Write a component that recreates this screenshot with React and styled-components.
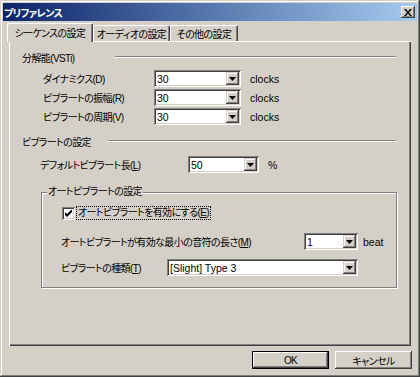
import React from 'react'
import styled, { createGlobalStyle } from 'styled-components'

const GlobalStyle = createGlobalStyle`
  html, body { margin: 0; padding: 0; background: #D4D0C8; }
  body {
    font-family: "Liberation Sans", "Noto Sans CJK JP", sans-serif;
    font-size: 10px;
    letter-spacing: -0.6px;
    font-feature-settings: "palt";
    color: #000;
  }
`

export default function App() {
    return (
        <Window>
            <GlobalStyle />
            <TitleBar>
                <Title>プリファレンス</Title>
                <CloseButton>
                    <svg width="8" height="7" viewBox="0 0 8 7">
                        <path d="M0 0h2l2 2.5L6 0h2L5 3.5 8 7H6L4 4.5 2 7H0l3-3.5z" fill="#000" />
                    </svg>
                </CloseButton>
            </TitleBar>
            <Body>
                <TabStrip>
                    <Tab active w={86}>シーケンスの設定</Tab>
                    <Tab w={77}>オーディオの設定</Tab>
                    <Tab w={68}>その他の設定</Tab>
                </TabStrip>
                <Panel>
                    <Header>
                        <HeaderText w={93}>分解能(VSTi)</HeaderText>
                        <Etched />
                    </Header>
                    <Rows indent={21} top={6}>
                        <Row>
                            <Label w={111}>ダイナミクス(D)</Label>
                            <Combo w={87} value="30" />
                            <Unit>clocks</Unit>
                        </Row>
                        <Row>
                            <Label w={111}>ビブラートの振幅(R)</Label>
                            <Combo w={87} value="30" />
                            <Unit>clocks</Unit>
                        </Row>
                        <Row>
                            <Label w={111}>ビブラートの周期(V)</Label>
                            <Combo w={87} value="30" />
                            <Unit>clocks</Unit>
                        </Row>
                    </Rows>
                    <Header top={9}>
                        <HeaderText w={86}>ビブラートの設定</HeaderText>
                        <Etched />
                    </Header>
                    <Rows indent={18} top={8}>
                        <Row>
                            <Label w={148}>デフォルトビブラート長(<u>L</u>)</Label>
                            <Combo w={71} value="50" />
                            <Unit>%</Unit>
                        </Row>
                    </Rows>
                    <GroupBox>
                        <Legend>オートビブラートの設定</Legend>
                        <CheckRow>
                            <CheckBox>
                                <svg width="7" height="7" viewBox="0 0 7 7">
                                    <path d="M0 2v3l2 2 5-5V-1L2 4z" fill="#000" />
                                </svg>
                            </CheckBox>
                            <FocusLabel>オートビブラートを有効にする(<u>E</u>)</FocusLabel>
                        </CheckRow>
                        <Rows indent={19} top={13} gap={9}>
                            <Row>
                                <Label w={243}>オートビブラートが有効な最小の音符の長さ(<u>M</u>)</Label>
                                <Combo w={54} value="1" />
                                <Unit gap={5}>beat</Unit>
                            </Row>
                            <Row>
                                <Label w={106}>ビブラートの種類(<u>T</u>)</Label>
                                <Combo w={191} value="[Slight] Type 3" />
                            </Row>
                        </Rows>
                    </GroupBox>
                </Panel>
                <ButtonRow>
                    <Button primary>OK</Button>
                    <Button>キャンセル</Button>
                </ButtonRow>
            </Body>
        </Window>
    )
}

function Combo({ w, value }) {
    return (
        <ComboBox w={w}>
            <ComboText>{value}</ComboText>
            <DropButton>
                <svg width="7" height="4" viewBox="0 0 7 4">
                    <path d="M0 0h7L3.5 4z" fill="#000" />
                </svg>
            </DropButton>
        </ComboBox>
    )
}

const Window = styled.div`
    width: 420px;
    height: 377px;
    box-sizing: border-box;
    padding: 3px;
    background: #D4D0C8;
    box-shadow: inset -1px -1px #404040, inset 1px 1px #D4D0C8, inset -2px -2px #808080, inset 2px 2px #fff;
    display: flex;
    flex-direction: column;
`
const TitleBar = styled.div`
    height: 18px;
    background: linear-gradient(to right, #0A246A, #A6CAF0);
    display: flex;
    align-items: center;
    justify-content: space-between;
    padding: 0 2px 0 1px;
`
const Title = styled.div`
    color: #fff;
    font-weight: bold;
`
const CloseButton = styled.div`
    width: 14px;
    height: 12px;
    box-sizing: border-box;
    background: #D4D0C8;
    box-shadow: inset -1px -1px #404040, inset 1px 1px #fff, inset -2px -2px #808080;
    display: flex;
    align-items: center;
    justify-content: center;
`
const Body = styled.div`
    display: flex;
    flex-direction: column;
    padding: 2px 5px 0 6px;
`
const TabStrip = styled.div`
    height: 18px;
    display: flex;
    align-items: flex-end;
    margin-left: -2px;
    position: relative;
    z-index: 1;
`
const Tab = styled.div`
    width: ${p => p.w}px;
    height: ${p => (p.active ? 19 : 16)}px;
    margin-bottom: ${p => (p.active ? -1 : 0)}px;
    box-sizing: border-box;
    background: #D4D0C8;
    border-top-left-radius: 2px;
    border-top-right-radius: 2px;
    border-left: 1px solid #fff;
    border-top: 1px solid #fff;
    border-right: 1px solid #404040;
    box-shadow: inset -1px 0 #808080;
    display: flex;
    align-items: center;
    justify-content: center;
    padding-bottom: ${p => (p.active ? 2 : 0)}px;
    white-space: nowrap;
`
const Panel = styled.div`
    width: 402px;
    height: 305px;
    box-sizing: border-box;
    padding: 9px 15px 0 13px;
    box-shadow: inset 1px 1px #fff, inset -1px -1px #404040, inset -2px -2px #808080;
    display: flex;
    flex-direction: column;
`
const Header = styled.div`
    display: flex;
    align-items: center;
    height: 14px;
    margin-top: ${p => p.top || 0}px;
`
const HeaderText = styled.div`
    width: ${p => p.w}px;
    white-space: nowrap;
`
const Etched = styled.div`
    flex: 1;
    height: 0;
    border-top: 1px solid #808080;
    border-bottom: 1px solid #fff;
`
const Rows = styled.div`
    display: flex;
    flex-direction: column;
    gap: ${p => (p.gap === undefined ? 2 : p.gap)}px;
    padding-left: ${p => p.indent}px;
    margin-top: ${p => p.top}px;
`
const Row = styled.div`
    display: flex;
    align-items: center;
    height: 17px;
`
const Label = styled.div`
    width: ${p => p.w}px;
    white-space: nowrap;
`
const Unit = styled.div`
    margin-left: ${p => (p.gap === undefined ? 9 : p.gap)}px;
    font-size: 10.5px;
    letter-spacing: 0;
`
const ComboBox = styled.div`
    width: ${p => p.w}px;
    height: 17px;
    box-sizing: border-box;
    background: #fff;
    box-shadow: inset 1px 1px #808080, inset -1px -1px #fff, inset 2px 2px #404040, inset -2px -2px #D4D0C8;
    display: flex;
    align-items: stretch;
    padding: 2px;
`
const ComboText = styled.div`
    flex: 1;
    display: flex;
    align-items: center;
    padding-left: 1px;
    white-space: nowrap;
    overflow: hidden;
    font-size: 10.5px;
    letter-spacing: 0;
`
const DropButton = styled.div`
    width: 13px;
    background: #D4D0C8;
    box-shadow: inset -1px -1px #404040, inset 1px 1px #D4D0C8, inset -2px -2px #808080, inset 2px 2px #fff;
    display: flex;
    align-items: center;
    justify-content: center;
`
const GroupBox = styled.div`
    position: relative;
    margin: 19px -1px 0 19px;
    height: 96px;
    box-sizing: border-box;
    border: 1px solid #808080;
    box-shadow: 1px 1px 0 #fff, inset 1px 1px 0 #fff;
    padding: 13px 0 0 0;
`
const Legend = styled.div`
    position: absolute;
    top: -8px;
    left: 5px;
    padding: 0 1px;
    background: #D4D0C8;
    line-height: 14px;
`
const CheckRow = styled.div`
    display: flex;
    align-items: center;
    padding-left: 20px;
    height: 14px;
`
const CheckBox = styled.div`
    width: 13px;
    height: 13px;
    box-sizing: border-box;
    background: #fff;
    box-shadow: inset 1px 1px #808080, inset -1px -1px #fff, inset 2px 2px #404040, inset -2px -2px #D4D0C8;
    display: flex;
    align-items: center;
    justify-content: center;
`
const FocusLabel = styled.div`
    margin-left: 1px;
    padding: 0 1px;
    border: 1px dotted #000;
    line-height: 12px;
    white-space: nowrap;
`
const ButtonRow = styled.div`
    display: flex;
    justify-content: flex-end;
    gap: 6px;
    margin-top: 5px;
`
const Button = styled.div`
    width: 77px;
    height: 18px;
    box-sizing: border-box;
    background: #D4D0C8;
    border: ${p => (p.primary ? '1px solid #000' : 'none')};
    box-shadow: inset -1px -1px #404040, inset 1px 1px #fff, inset -2px -2px #808080;
    display: flex;
    align-items: center;
    justify-content: center;
`
